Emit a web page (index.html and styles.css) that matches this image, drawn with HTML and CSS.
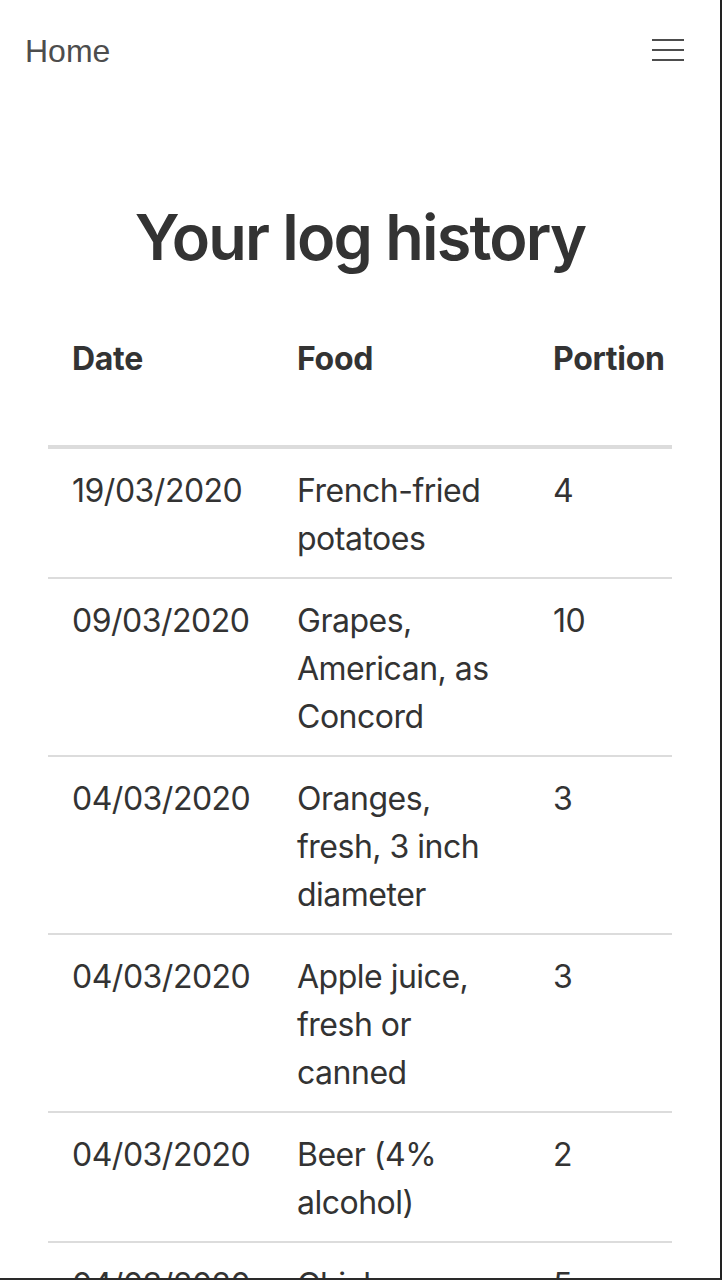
FILE: index.html
```html
<!DOCTYPE html>
<html lang="en">
<head>
<meta charset="utf-8">
<title>Your log history</title>
<link rel="stylesheet" href="styles.css">
</head>
<body>
<div class="page">
  <nav class="navbar">
    <a class="brand" href="#">Home</a>
    <button class="toggler" type="button" aria-label="Toggle navigation">
      <svg width="32" height="22" viewBox="0 0 32 22"><rect x="0" y="0" width="32" height="2" fill="#4d4d4d"/><rect x="0" y="10" width="32" height="2" fill="#4d4d4d"/><rect x="0" y="20" width="32" height="2" fill="#4d4d4d"/></svg>
    </button>
  </nav>
  <main class="content">
    <h1 class="title">Your log history</h1>
    <table class="log">
      <colgroup><col class="c-date"><col class="c-food"><col class="c-portion"></colgroup>
      <thead>
        <tr><th>Date</th><th>Food</th><th>Portion</th></tr>
      </thead>
      <tbody>
        <tr><td>19/03/2020</td><td>French-fried potatoes</td><td>4</td></tr>
        <tr><td>09/03/2020</td><td>Grapes, American, as Concord</td><td>10</td></tr>
        <tr><td>04/03/2020</td><td>Oranges, fresh, 3 inch diameter</td><td>3</td></tr>
        <tr><td>04/03/2020</td><td>Apple juice, fresh or canned</td><td>3</td></tr>
        <tr><td>04/03/2020</td><td>Beer (4% alcohol)</td><td>2</td></tr>
        <tr><td>04/03/2020</td><td>Chicken, roasted</td><td>5</td></tr>
      </tbody>
    </table>
  </main>
</div>
</body>
</html>
```
FILE: styles.css
```css
* { box-sizing: border-box; }
html, body { margin: 0; padding: 0; background: #fff; }
.page {
  width: 722px;
  height: 1280px;
  overflow: hidden;
  border-right: 2px solid #222;
  border-bottom: 2px solid #2a2a2a;
  font-family: Inter, "Noto Sans", sans-serif;
  color: #333;
}
.navbar {
  display: flex;
  justify-content: space-between;
  align-items: flex-start;
  padding: 27px 36px 0 25px;
  height: 75px;
}
.brand {
  font-family: "Liberation Sans", Arial, sans-serif;
  font-size: 32px;
  line-height: 48px;
  color: #4d4d4d;
  text-decoration: none;
}
.toggler {
  border: 0;
  background: none;
  padding: 0;
  margin-top: 12px;
  display: flex;
}
.content { padding: 0 48px; }
.title {
  margin: 124px 0 0;
  text-align: center;
  font-size: 63px;
  line-height: 76px;
  font-weight: 600;
  letter-spacing: -1.8px;
}
.log {
  margin-top: 44px;
  width: 624px;
  border-collapse: collapse;
  table-layout: fixed;
  font-size: 32px;
  line-height: 48px;
}
.c-date { width: 225px; }
.c-food { width: 256px; }
.c-portion { width: 143px; }
.log th {
  text-align: left;
  font-weight: 700;
  vertical-align: top;
  padding: 16px 24px 62px;
  border-bottom: 4px solid #dcdcdc;
  white-space: nowrap;
  overflow: visible;
  letter-spacing: -0.3px;
}
.log td {
  vertical-align: top;
  padding: 18px 24px 14px;
  border-top: 2px solid #dcdcdc;
  letter-spacing: -0.5px;
}
.log tbody tr:first-child td { border-top: 0; padding-top: 18px; }
```
